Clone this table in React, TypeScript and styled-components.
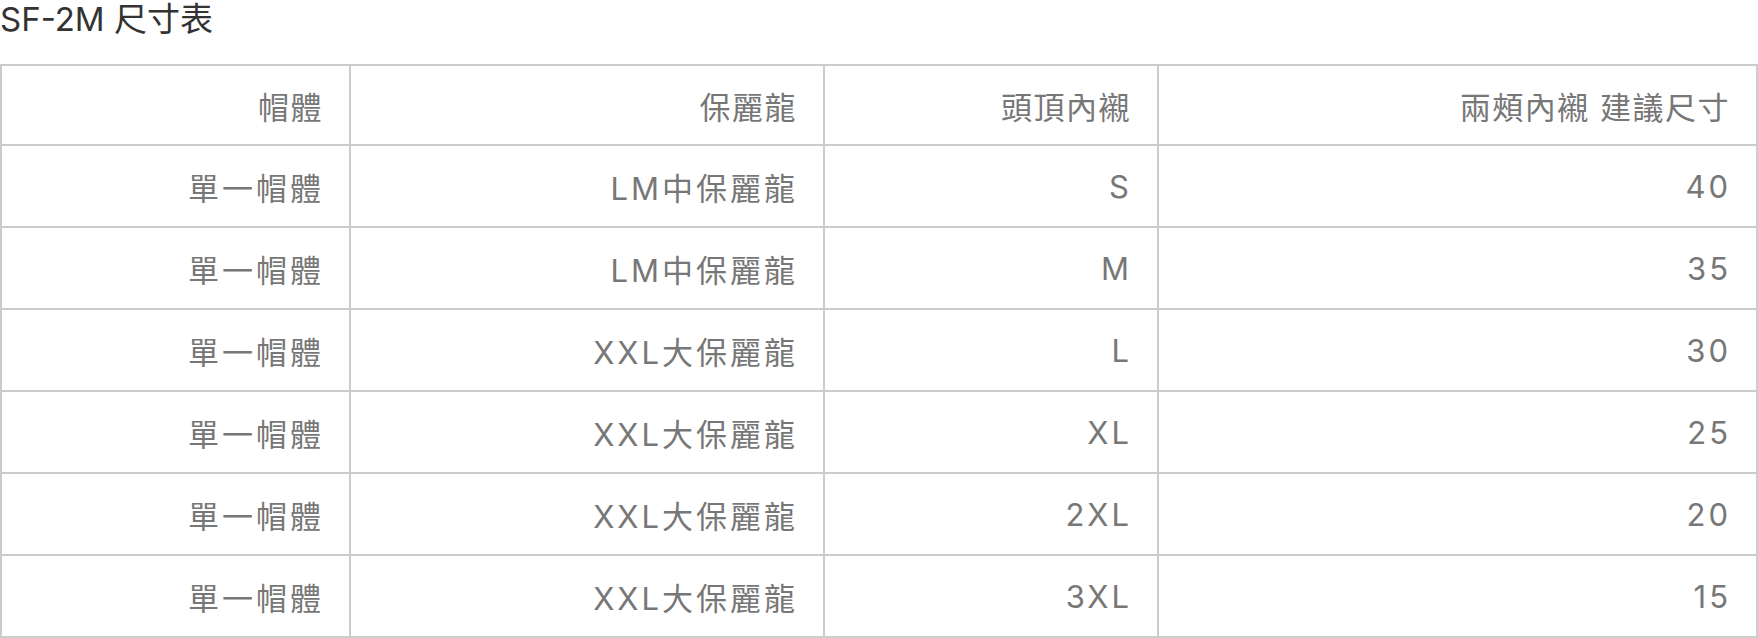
import styled, { createGlobalStyle } from "styled-components";

const GlobalStyle = createGlobalStyle`
    body {
        margin: 0;
        background: #fff;
        font-family: Inter, "Noto Sans CJK TC", sans-serif;
    }
`

const Page = styled.div`
    width: 1758px;
`

const Title = styled.div`
    font-size: 33px;
    line-height: 38px;
    color: #333;
    margin-bottom: 26px;
`

const SizeTable = styled.table`
    width: 1756px;
    table-layout: fixed;
    border-collapse: collapse;
    border: 2px solid #cccccc;
    color: #777;
    font-size: 31px;
    letter-spacing: 3px;
`

const HeadCell = styled.th`
    height: 78px;
    padding: 0 26px 0 0;
    border: 2px solid #cccccc;
    text-align: right;
    font-weight: normal;
    letter-spacing: 1.5px;
`

const Cell = styled.td`
    height: 80px;
    padding: 0 25px 0 0;
    border: 2px solid #cccccc;
    text-align: right;
    vertical-align: middle;
`

const widths = [349, 474, 334, 599];
const headers = ["帽體", "保麗龍", "頭頂內襯", "兩頰內襯 建議尺寸"];

const rows = [
    ["單一帽體", "LM中保麗龍", "S", "40"],
    ["單一帽體", "LM中保麗龍", "M", "35"],
    ["單一帽體", "XXL大保麗龍", "L", "30"],
    ["單一帽體", "XXL大保麗龍", "XL", "25"],
    ["單一帽體", "XXL大保麗龍", "2XL", "20"],
    ["單一帽體", "XXL大保麗龍", "3XL", "15"],
];

export default function App() {
    return (<>
        <GlobalStyle />
        <Page>
            <Title>SF-2M 尺寸表</Title>
            <SizeTable>
                <colgroup>
                    {widths.map((w, i) => <col key={i} style={{ width: w }} />)}
                </colgroup>
                <thead>
                    <tr>
                        {headers.map(h => <HeadCell key={h}>{h}</HeadCell>)}
                    </tr>
                </thead>
                <tbody>
                    {rows.map((r, i) => (
                        <tr key={i}>
                            {r.map((c, j) => <Cell key={j}>{c}</Cell>)}
                        </tr>
                    ))}
                </tbody>
            </SizeTable>
        </Page>
    </>);
}
